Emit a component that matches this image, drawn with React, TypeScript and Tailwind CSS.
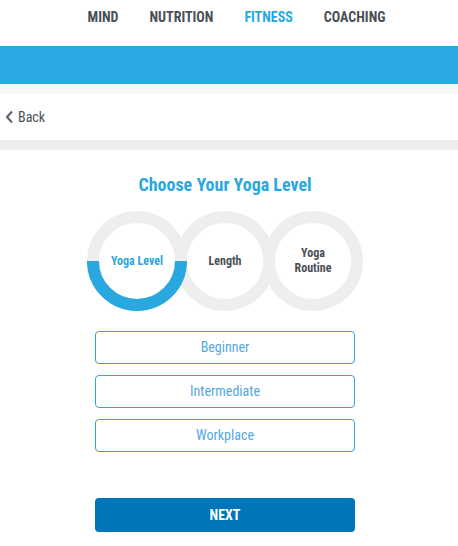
const font = { fontFamily: '"Roboto Condensed", "Liberation Sans Narrow", Roboto, sans-serif' };

const Ring = ({ label, active }: { label: React.ReactNode; active?: boolean }) => (
  <div className={`relative w-[100px] h-[100px] -mx-[6px] shrink-0 ${active ? "z-10" : ""}`}>
    <svg width="100" height="100" viewBox="0 0 100 100" className="absolute inset-0">
      <circle cx="50" cy="50" r="44" fill="#fff" stroke="#eeeeee" strokeWidth="12" />
      {active && <path d="M6 50 A44 44 0 0 0 94 50" fill="none" stroke="#29a8e0" strokeWidth="12" />}
    </svg>
    <div
      className={`absolute inset-0 flex items-center justify-center text-center text-[12px] font-bold leading-[15px] ${
        active ? "text-[#29a8e0]" : "text-[#4a4f57]"
      }`}
    >
      {label}
    </div>
  </div>
);

export default function App() {
  return (
    <div className="w-[458px] min-h-[546px] bg-white" style={font}>
      <nav className="h-[46px] flex items-start justify-center gap-[31px] pl-[15px] pt-[7px] text-[14px] font-bold text-[#4a4f57]">
        <span>MIND</span>
        <span>NUTRITION</span>
        <span className="text-[#29a8e0]">FITNESS</span>
        <span>COACHING</span>
      </nav>
      <div className="h-[38px] bg-[#29a9e1]" />
      <div className="h-[10px] bg-[#f7f7f7]" />
      <div className="h-[46px] flex items-center pl-[5px] text-[14px] text-[#4a4f57]">
        <svg width="9" height="14" viewBox="0 0 9 14" className="mr-[4px]">
          <path d="M7 1.5 L2 7 L7 12.5" fill="none" stroke="#5f6670" strokeWidth="2.2" />
        </svg>
        <span>Back</span>
      </div>
      <div className="h-[10px] bg-[#eeeeee]" />

      <div className="w-[450px]">
        <h1 className="mt-[24px] text-center text-[18px] font-bold text-[#29a8e0] leading-[22px]">
          Choose Your Yoga Level
        </h1>

        <div className="mt-[15px] flex justify-center">
          <Ring label="Yoga Level" active />
          <Ring label="Length" />
          <Ring
            label={
              <span>
                Yoga
                <br />
                Routine
              </span>
            }
          />
        </div>

        <div className="mt-[20px] flex flex-col items-center gap-[11px]">
          {["Beginner", "Intermediate", "Workplace"].map((o) => (
            <button
              key={o}
              className="w-[260px] h-[33px] rounded-[4px] border border-[#29a8e0] bg-white text-[14px] text-[#55a8e0]"
            >
              {o}
            </button>
          ))}
        </div>

        <div className="mt-[46px] flex justify-center">
          <button className="w-[260px] h-[34px] rounded-[4px] bg-[#0075b9] text-[14px] font-bold text-white">
            NEXT
          </button>
        </div>
      </div>
    </div>
  );
}
